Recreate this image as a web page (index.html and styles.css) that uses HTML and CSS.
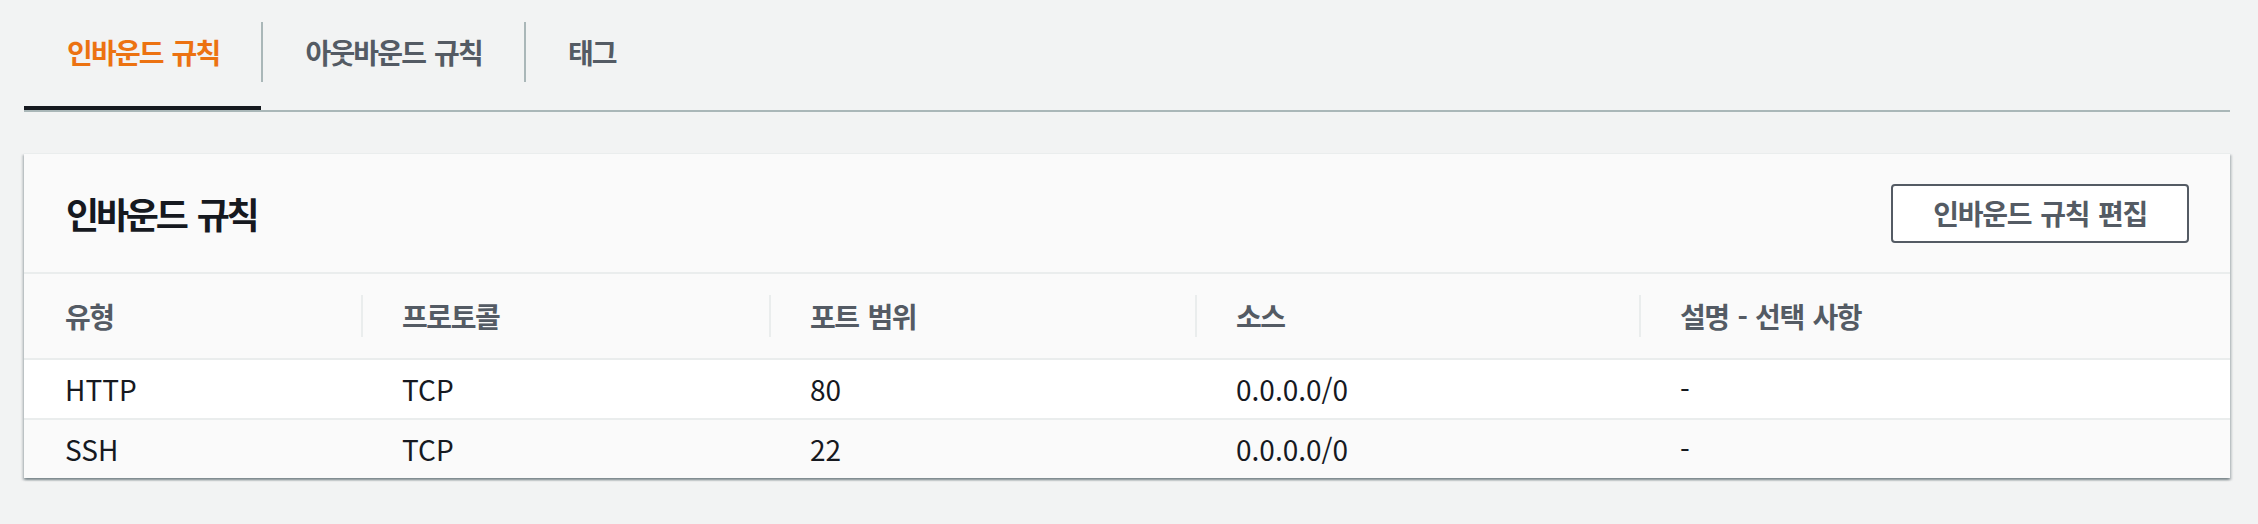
FILE: index.html
```html
<!DOCTYPE html>
<html lang="ko">
<head>
<meta charset="utf-8">
<title>인바운드 규칙</title>
<link rel="stylesheet" href="styles.css">
</head>
<body>
<nav class="tabs">
  <div class="tab active"><span class="tab-label">인바운드 규칙</span></div>
  <div class="tab"><span class="tab-label sep">아웃바운드 규칙</span></div>
  <div class="tab"><span class="tab-label sep">태그</span></div>
</nav>
<section class="card">
  <header class="card-header">
    <h2 class="title">인바운드 규칙</h2>
    <button class="btn">인바운드 규칙 편집</button>
  </header>
  <div class="table">
    <div class="row head">
      <div class="cell">유형</div>
      <div class="cell">프로토콜</div>
      <div class="cell">포트 범위</div>
      <div class="cell">소스</div>
      <div class="cell">설명 - 선택 사항</div>
    </div>
    <div class="row body odd">
      <div class="cell">HTTP</div>
      <div class="cell">TCP</div>
      <div class="cell">80</div>
      <div class="cell">0.0.0.0/0</div>
      <div class="cell">-</div>
    </div>
    <div class="row body even last">
      <div class="cell">SSH</div>
      <div class="cell">TCP</div>
      <div class="cell">22</div>
      <div class="cell">0.0.0.0/0</div>
      <div class="cell">-</div>
    </div>
  </div>
</section>
</body>
</html>
```
FILE: styles.css
```css
* { box-sizing: border-box; }
html, body { margin: 0; padding: 0; }
body {
  background: #f2f3f3;
  font-family: "Noto Sans CJK KR", "Noto Sans", sans-serif;
  color: #16191f;
  width: 2258px;
  height: 524px;
  overflow: hidden;
}

.tabs {
  display: flex;
  margin: 0 28px 0 24px;
  border-bottom: 2px solid #aab7b8;
}
.tab {
  padding: 22px 0 24px;
  border-bottom: 4px solid transparent;
}
.tab.active { border-bottom-color: #16191f; }
.tab-label {
  display: block;
  height: 60px;
  line-height: 60px;
  padding: 0 42px 0 43px;
  font-size: 28px;
  font-weight: 700;
  letter-spacing: -0.065em;
  word-spacing: 0.1em;
  color: #545b64;
}
.tab.active .tab-label { color: #ec7211; }
.tab-label.sep { border-left: 2px solid #aab7b8; padding-left: 42px; }

.card {
  margin: 41px 28px 0 24px;
  background: #fafafa;
  border-top: 1px solid #eaeded;
  box-shadow: 0 2px 2px 0 rgba(0,28,36,.3), 2px 2px 2px 0 rgba(0,28,36,.15), -2px 2px 2px 0 rgba(0,28,36,.15);
}
.card-header {
  display: flex;
  align-items: center;
  justify-content: space-between;
  height: 120px;
  padding: 0 41px 0 42px;
  border-bottom: 2px solid #eaeded;
}
.title {
  margin: 0;
  font-size: 36px;
  font-weight: 700;
  letter-spacing: -0.09em;
  word-spacing: 0.12em;
  color: #16191f;
}
.btn {
  height: 59px;
  padding: 0 40px;
  background: #fff;
  border: 2px solid #545b64;
  border-radius: 4px;
  font-family: "Noto Sans CJK KR", "Noto Sans", sans-serif;
  font-size: 28px;
  font-weight: 700;
  letter-spacing: -0.045em;
  word-spacing: 0.08em;
  color: #545b64;
}

.row {
  display: grid;
  grid-template-columns: 337px 408px 426px 444px 1fr;
  align-items: center;
  border-bottom: 2px solid #eaeded;
}
.row.head { height: 86px; background: #fafafa; }
.row.body { height: 60px; font-size: 28px; }
.row.odd { background: #fff; }
.row.even { background: #fafafa; }
.row.last { border-bottom: none; height: 58px; }
.cell { padding-left: 41px; }
.head .cell {
  display: flex;
  align-items: center;
  height: 42px;
  font-size: 28px;
  font-weight: 700;
  letter-spacing: -0.05em;
  word-spacing: 0.08em;
  color: #545b64;
}
.head .cell + .cell { border-left: 2px solid #eaeded; padding-left: 39px; }
```
